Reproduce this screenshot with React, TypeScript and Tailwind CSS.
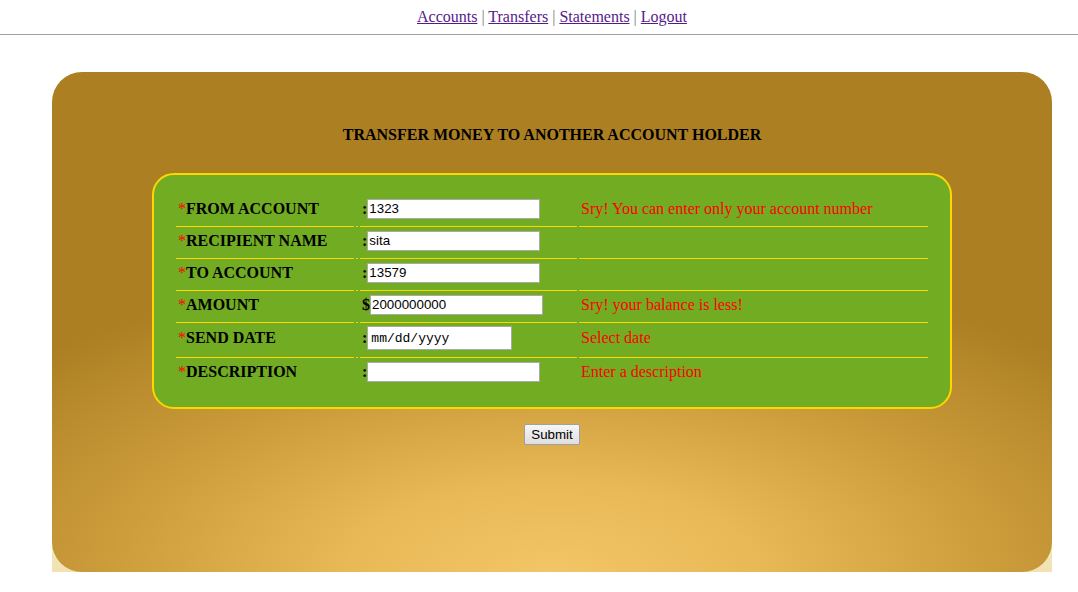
import React from "react";

type Row = {
  label: string;
  sign: string;
  value: string;
  msg: string;
  date?: boolean;
  last?: boolean;
};

const rows: Row[] = [
  { label: "FROM ACCOUNT", sign: ":", value: "1323", msg: "Sry! You can enter only your account number" },
  { label: "RECIPIENT NAME", sign: ":", value: "sita", msg: "" },
  { label: "TO ACCOUNT", sign: ":", value: "13579", msg: "" },
  { label: "AMOUNT", sign: "$", value: "2000000000", msg: "Sry! your balance is less!" },
  { label: "SEND DATE", sign: ":", value: "mm/dd/yyyy", msg: "Select date", date: true },
  { label: "DESCRIPTION", sign: ":", value: "", msg: "Enter a description", last: true },
];

function FormRow({ row }: { row: Row }) {
  // every cell carries its own bottom line, like a separated table
  const cell = row.last ? "" : "border-b border-[#ffd700]";
  const h = row.date ? "h-[33px] pb-[6px]" : "h-[30px] pb-[6px]";
  return (
    <div className="flex gap-[2px]">
      <div className={`w-[178px] flex items-center ${h} ${cell}`}>
        <span className="text-[#ff0000] pl-[2px]">*</span>
        <span className="font-bold text-black">{row.label}</span>
      </div>
      <div className={`w-[2px] ${h} ${cell}`}></div>
      <div className={`w-[217px] flex items-center pl-[2px] ${h} ${cell}`}>
        <span className="font-bold text-black">{row.sign}</span>
        {row.date ? (
          <input
            readOnly
            value={row.value}
            className="w-[145px] h-[24px] bg-white border border-[#a9a9a9] px-[3px] text-[13px] text-black outline-none"
            style={{ fontFamily: '"Liberation Mono", monospace' }}
          />
        ) : (
          <input
            readOnly
            value={row.value}
            className="w-[173px] h-[20px] bg-white border border-[#a9a9a9] px-[1px] text-[13.33px] text-black outline-none"
            style={{ fontFamily: '"Liberation Sans", Arial, sans-serif' }}
          />
        )}
      </div>
      <div className={`flex-1 flex items-center pl-[2px] text-[#ff0000] ${h} ${cell}`}>{row.msg}</div>
    </div>
  );
}

function App() {
  return (
    <div
      className="w-[1078px] h-[592px] bg-white overflow-hidden text-[16px] text-black"
      style={{ fontFamily: '"Liberation Serif", "Times New Roman", serif' }}
    >
      <div className="h-[35px] border-b border-[#a0a0a0]">
        <div className="ml-[52px] w-[1000px] pt-[8px] text-center leading-[18px]">
          <a href="#" className="underline text-[#551a8b]">Accounts</a>
          <span className="text-[#7a7a7a]"> | </span>
          <a href="#" className="underline text-[#551a8b]">Transfers</a>
          <span className="text-[#7a7a7a]"> | </span>
          <a href="#" className="underline text-[#551a8b]">Statements</a>
          <span className="text-[#7a7a7a]"> | </span>
          <a href="#" className="underline text-[#551a8b]">Logout</a>
        </div>
      </div>

      <div className="ml-[52px] mt-[37px] w-[1000px] h-[500px] bg-gradient-to-b from-white from-50% to-[#f0e2b4]">
        <div className="w-full h-full rounded-[30px] bg-[radial-gradient(ellipse_72%_62%_at_50%_100%,#f2c566_0%,#e9b957_28%,#cc9c3b_62%,#ab7f22_100%)] pt-[54px]">
          <div className="h-[18px] leading-[18px] text-center font-bold">
            TRANSFER MONEY TO ANOTHER ACCOUNT HOLDER
          </div>

          <div className="mt-[29px] mx-auto w-[800px] border-2 border-[#ffd700] rounded-[22px] bg-[#72ac22] pt-[22px] px-[22px] pb-[17px]">
            <div className="flex flex-col gap-[2px]">
              {rows.map((r) => (
                <FormRow key={r.label} row={r} />
              ))}
            </div>
          </div>

          <div className="mt-[15px] flex justify-center">
            <button
              className="h-[21px] px-[6px] border border-[#a0a0a0] rounded-[2px] bg-gradient-to-b from-[#f6f6f6] to-[#dedede] text-[13.33px] text-black leading-[17px]"
              style={{ fontFamily: '"Liberation Sans", Arial, sans-serif' }}
            >
              Submit
            </button>
          </div>
        </div>
      </div>
    </div>
  );
}

export default App;
